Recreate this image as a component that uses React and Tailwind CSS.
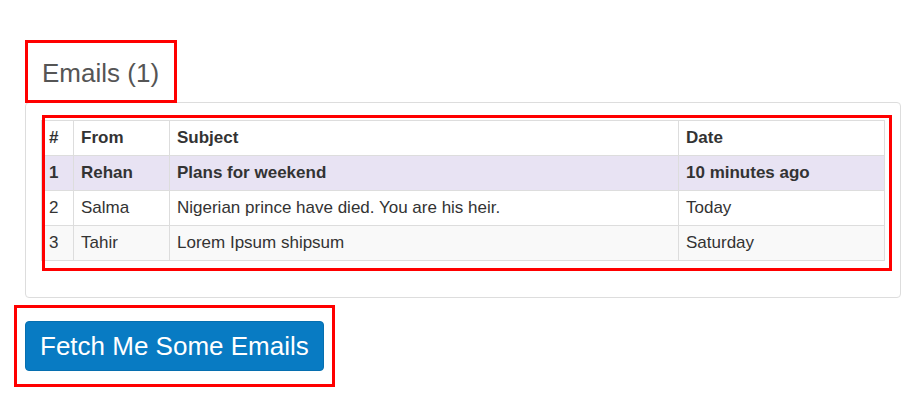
const emails = [
  { id: 1, from: 'Rehan', subject: 'Plans for weekend', date: '10 minutes ago', unread: true },
  { id: 2, from: 'Salma', subject: 'Nigerian prince have died. You are his heir.', date: 'Today' },
  { id: 3, from: 'Tahir', subject: 'Lorem Ipsum shipsum', date: 'Saturday' },
];

export default function App() {
  const unread = emails.filter((e) => e.unread).length;

  return (
    <div
      className="relative w-[920px] h-[409px] bg-white overflow-hidden text-[#333]"
      style={{ fontFamily: '"Liberation Sans", Arial, sans-serif' }}
    >
      <div className="pt-[40px] pl-[25px]">
        {/* Title */}
        <div className="h-[62px]">
          <h2 className="pt-[19px] pl-[17px] text-[26px] leading-[28px] text-[#555] font-normal">
            Emails ({unread})
          </h2>
        </div>

        {/* Panel */}
        <div className="w-[876px] border border-[#ddd] rounded-[4px] pt-[17px] px-[15px] pb-[36px]">
          <table className="w-full table-fixed border-collapse border border-[#ddd] text-[17px] leading-[20px]">
            <colgroup>
              <col className="w-[32px]" />
              <col className="w-[96px]" />
              <col className="w-[509px]" />
              <col />
            </colgroup>
            <thead>
              <tr className="bg-white">
                <th className="border border-[#ddd] px-[7px] py-[7px] text-left font-bold">#</th>
                <th className="border border-[#ddd] px-[7px] py-[7px] text-left font-bold">From</th>
                <th className="border border-[#ddd] px-[7px] py-[7px] text-left font-bold">Subject</th>
                <th className="border border-[#ddd] px-[7px] py-[7px] text-left font-bold">Date</th>
              </tr>
            </thead>
            <tbody>
              {emails.map((e, i) => (
                <tr
                  key={e.id}
                  className={e.unread ? 'bg-[#e8e3f3] font-bold' : i % 2 === 0 ? 'bg-[#f9f9f9]' : 'bg-white'}
                >
                  <td className="border border-[#ddd] px-[7px] py-[7px]">{e.id}</td>
                  <td className="border border-[#ddd] px-[7px] py-[7px]">{e.from}</td>
                  <td className="border border-[#ddd] px-[7px] py-[7px]">{e.subject}</td>
                  <td className="border border-[#ddd] px-[7px] py-[7px]">{e.date}</td>
                </tr>
              ))}
            </tbody>
          </table>
        </div>

        {/* Fetch button */}
        <div className="mt-[23px]">
          <button className="h-[50px] px-[14px] bg-[#087bc3] text-white text-[26px] leading-[30px] rounded-[4px] border border-[#066fb0]">
            Fetch Me Some Emails
          </button>
        </div>
      </div>

      {/* Annotation boxes */}
      <div className="absolute left-[25px] top-[40px] w-[152px] h-[63px] border-[3px] border-[#ff0000] pointer-events-none" />
      <div className="absolute left-[42px] top-[115px] w-[850px] h-[156px] border-[3px] border-[#ff0000] pointer-events-none" />
      <div className="absolute left-[14px] top-[305px] w-[321px] h-[82px] border-[3px] border-[#ff0000] pointer-events-none" />
    </div>
  );
}
